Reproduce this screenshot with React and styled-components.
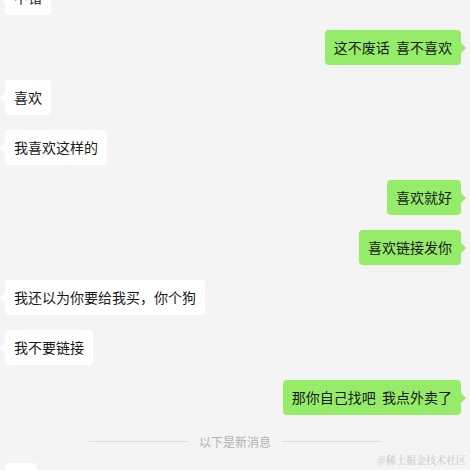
import React from "react";
import styled, { createGlobalStyle } from "styled-components";

const messages = [
  { self: false, text: "不错" },
  { self: true, text: "这不废话 喜不喜欢" },
  { self: false, text: "喜欢" },
  { self: false, text: "我喜欢这样的" },
  { self: true, text: "喜欢就好" },
  { self: true, text: "喜欢链接发你" },
  { self: false, text: "我还以为你要给我买，你个狗" },
  { self: false, text: "我不要链接" },
  { self: true, text: "那你自己找吧 我点外卖了" },
];

function App() {
  return (
    <Page>
      <Global />
      <Chat>
        {messages.map((m, i) => (
          <Row key={i} $self={m.self}>
            <Bubble $self={m.self}>{m.text}</Bubble>
          </Row>
        ))}
        <Divider>
          <Line />
          <DividerText>以下是新消息</DividerText>
          <Line />
        </Divider>
        <Row>
          <Bubble>嗯</Bubble>
        </Row>
      </Chat>
      <Watermark>@稀土掘金技术社区</Watermark>
    </Page>
  );
}

export default App;

const Global = createGlobalStyle`
  html, body {
    margin: 0;
    padding: 0;
    background: #f4f4f4;
    overflow: hidden;
  }
`;

const Page = styled.div`
  position: relative;
  width: 470px;
  height: 470px;
  overflow: hidden;
  background: #f4f4f4;
  font-family: "Noto Sans CJK SC", "Noto Sans", sans-serif;
`;

const Chat = styled.div`
  display: flex;
  flex-direction: column;
  gap: 15px;
  margin-top: -20px;
`;

const Row = styled.div`
  display: flex;
  justify-content: ${(p) => (p.$self ? "flex-end" : "flex-start")};
  padding: 0 9px 0 5px;
`;

const Bubble = styled.div`
  position: relative;
  height: 35px;
  line-height: 35px;
  padding: 0 9px;
  border-radius: 4px;
  font-size: 14px;
  word-spacing: 3px;
  color: #191919;
  white-space: nowrap;
  background: ${(p) => (p.$self ? "#95ec69" : "#ffffff")};

  &::before {
    content: "";
    position: absolute;
    top: 50%;
    margin-top: -5px;
    ${(p) => (p.$self ? "right: -5px;" : "left: -5px;")}
    border-top: 5px solid transparent;
    border-bottom: 5px solid transparent;
    ${(p) =>
      p.$self
        ? "border-left: 5px solid #95ec69;"
        : "border-right: 5px solid #ffffff;"}
  }
`;

const Divider = styled.div`
  display: flex;
  align-items: center;
  justify-content: center;
  gap: 11px;
  height: 18px;
  margin: 2px 0 -2px;
`;

const Line = styled.div`
  width: 99px;
  height: 1px;
  background: #dcdcdc;
`;

const DividerText = styled.span`
  font-size: 12px;
  color: #b2b2b2;
`;

const Watermark = styled.div`
  position: absolute;
  right: 4px;
  bottom: 3px;
  font-family: "Noto Serif CJK SC", "Liberation Serif", "Noto Sans CJK SC", serif;
  font-size: 10px;
  color: #c4c4c4;
`;
